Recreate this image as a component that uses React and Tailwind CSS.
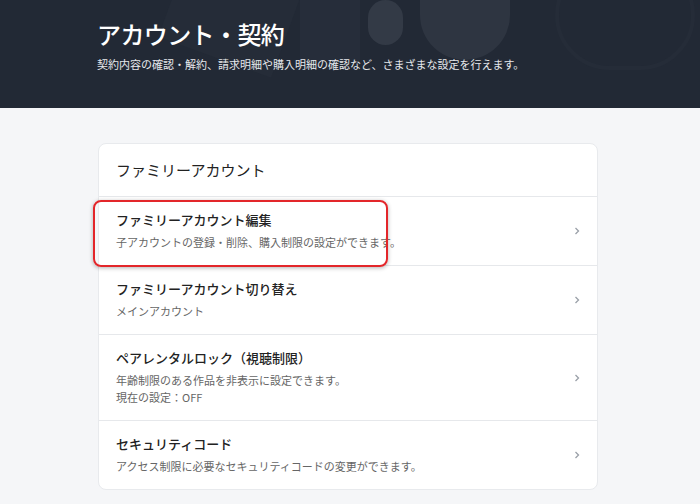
export default function App() {
  const f = { fontFamily: '"Noto Sans CJK JP", "Noto Sans", sans-serif' };
  const Chev = () => (
    <svg width="8" height="10" viewBox="0 0 8 10" className="shrink-0"><path d="M2.5 2 L5.5 5 L2.5 8" fill="none" stroke="#9aa0a8" strokeWidth="1.3" /></svg>
  );
  const Row = ({ t, d, last, children }) => (
    <div className={`relative flex items-center justify-between pl-[17px] pr-[16px] ${last ? '' : 'border-b border-[#e6e8eb]'}`}>
      <div className="py-[14px] flex flex-col">
        <div className="text-[13px] leading-[18px] text-[#222] font-medium">{t}</div>
        <div className="mt-[5px] flex flex-col">
          {d.map((x, i) => <div key={i} className="text-[11px] leading-[17px] text-[#666]">{x}</div>)}
        </div>
      </div>
      <Chev />
      {children}
    </div>
  );
  return (
    <div style={f} className="w-[700px] h-[504px] overflow-hidden bg-[#f5f6f8]">
      <div className="relative h-[108px] bg-[#222935] overflow-hidden">
        <div className="absolute left-[170px] -top-[30px] w-[120px] h-[90px] bg-[#252c38] rotate-[20deg]"></div>
        <div className="absolute left-[300px] -top-[10px] w-[60px] h-[70px] bg-[#262d3a]"></div>
        <div className="absolute left-[368px] top-[0px] w-[35px] h-[45px] rounded-full bg-[#333a46]"></div>
        <div className="absolute left-[420px] -top-[30px] w-[90px] h-[90px] rounded-b-full bg-[#2e3541]"></div>
        <div className="absolute left-[555px] -top-[40px] w-[140px] h-[110px] rounded-full border-[4px] border-[#252c38]"></div>
        <div className="relative pl-[97px] pt-[18px] flex flex-col gap-[6px]">
          <div className="text-[24px] leading-[32px] text-white font-medium tracking-tight">アカウント・契約</div>
          <div className="text-[11px] leading-[16px] text-[#e6e8ec]">契約内容の確認・解約、請求明細や購入明細の確認など、さまざまな設定を行えます。</div>
        </div>
      </div>
      <div className="ml-[98px] mt-[35px] w-[500px] bg-white rounded-[8px] border border-[#e8eaed]">
        <div className="h-[53px] flex items-center pl-[17px] text-[15px] text-[#222] border-b border-[#e6e8eb]">ファミリーアカウント</div>
        <Row t="ファミリーアカウント編集" d={["子アカウントの登録・削除、購入制限の設定ができます。"]}>
          <div className="absolute left-[-6px] top-[3px] w-[295px] h-[67px] rounded-[8px] border-2 border-[#e3262a] shadow-[0_1px_4px_rgba(0,0,0,0.3)]"></div>
        </Row>
        <Row t="ファミリーアカウント切り替え" d={["メインアカウント"]} />
        <Row t="ペアレンタルロック（視聴制限）" d={["年齢制限のある作品を非表示に設定できます。", "現在の設定：OFF"]} />
        <Row t="セキュリティコード" d={["アクセス制限に必要なセキュリティコードの変更ができます。"]} last />
      </div>
    </div>
  );
}
